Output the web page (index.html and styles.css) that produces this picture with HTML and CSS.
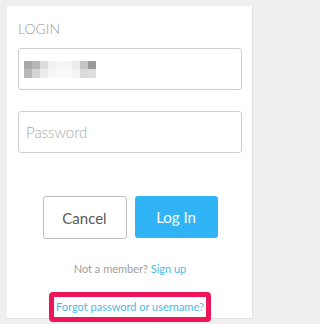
FILE: index.html
```html
<!DOCTYPE html>
<html>
<head>
<meta charset="utf-8">
<link rel="stylesheet" href="styles.css">
</head>
<body>
<div class="card">
  <h1 class="title">LOGIN</h1>
  <div class="field">
    <div class="pixels">
      <span></span><span></span><span></span><span></span><span></span><span></span><span></span><span></span><span></span>
      <span></span><span></span><span></span><span></span><span></span><span></span><span></span><span></span><span></span>
    </div>
  </div>
  <div class="field field-pw">
    <span class="placeholder">Password</span>
  </div>
  <div class="buttons">
    <button class="btn btn-cancel">Cancel</button>
    <button class="btn btn-login">Log In</button>
  </div>
  <p class="member">Not a member? <a class="link">Sign up</a></p>
  <div class="forgot-row">
    <a class="forgot">Forgot password or username?</a>
  </div>
</div>
</body>
</html>
```
FILE: styles.css
```css
html, body {
  margin: 0;
  padding: 0;
  background: #efefef;
}
body {
  font-family: Lato, "Liberation Sans", sans-serif;
  width: 260px;
  height: 324px;
  overflow: hidden;
}
.card {
  margin: 6px 7px 0 7px;
  background: #fff;
  border-right: 1px solid #e2e2e2;
  border-bottom: 1px solid #e2e2e2;
  padding: 14px 10px 0 11px;
}
.title {
  margin: 0;
  font-size: 14px;
  line-height: 18px;
  font-weight: 300;
  color: #9a9a9a;
}
.field {
  margin-top: 10px;
  height: 40px;
  border: 1px solid #cfcfcf;
  border-radius: 3px;
  display: flex;
  align-items: center;
  padding-left: 5px;
}
.field-pw {
  margin-top: 21px;
  padding-left: 7px;
}
.pixels {
  display: grid;
  grid-template-columns: repeat(9, 8px);
  grid-template-rows: 8px 9px;
  margin-top: 1px;
}
.pixels span:nth-child(1) { background: #a8a8a8; }
.pixels span:nth-child(2) { background: #b6b6b6; }
.pixels span:nth-child(3) { background: #dcdcdc; }
.pixels span:nth-child(4) { background: #f2f2f2; }
.pixels span:nth-child(5) { background: #f6f6f6; }
.pixels span:nth-child(6) { background: #f4f4f4; }
.pixels span:nth-child(7) { background: #ececec; }
.pixels span:nth-child(8) { background: #c4c4c4; }
.pixels span:nth-child(9) { background: #9a9a9a; }
.pixels span:nth-child(10) { background: #b8b8b8; }
.pixels span:nth-child(11) { background: #d4d4d4; }
.pixels span:nth-child(12) { background: #ececec; }
.pixels span:nth-child(13) { background: #f7f7f7; }
.pixels span:nth-child(14) { background: #fafafa; }
.pixels span:nth-child(15) { background: #f9f9f9; }
.pixels span:nth-child(16) { background: #f3f3f3; }
.pixels span:nth-child(17) { background: #dadada; }
.pixels span:nth-child(18) { background: #dedede; }
.placeholder {
  font-size: 15px;
  font-weight: 300;
  color: #a8a8a8;
}
.buttons {
  margin-top: 43px;
  display: flex;
  justify-content: center;
  gap: 8px;
}
.btn {
  font-family: Lato, "Liberation Sans", sans-serif;
  font-size: 15px;
  height: 42px;
  width: 84px;
  border-radius: 3px;
  padding: 0;
  margin: 0;
}
.btn-cancel {
  background: #fff;
  border: 1px solid #bdbdbd;
  color: #5a5a5a;
  height: 43px;
}
.btn-login {
  background: #31b4f5;
  border: none;
  color: #fff;
  width: 83px;
}
.member {
  margin: 23px 0 0 0;
  text-align: center;
  font-size: 11px;
  line-height: 14px;
  color: #a0a0a0;
}
.link {
  color: #4cb9e4;
}
.forgot-row {
  display: flex;
  justify-content: center;
  margin-top: 16px;
  margin-bottom: -4px;
}
.forgot {
  border: 5px solid #ef1559;
  border-radius: 4px;
  padding: 0 2px;
  font-size: 11px;
  line-height: 20px;
  color: #4cb9e4;
  background: #fff;
}
```
